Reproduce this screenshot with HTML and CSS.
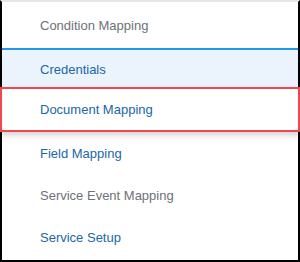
FILE: index.html
```html
<!DOCTYPE html>
<html>
<head>
<meta charset="utf-8">
<link rel="stylesheet" href="styles.css">
</head>
<body>
<div class="frame">
  <ul class="menu">
    <li class="item muted first">Condition Mapping</li>
    <li class="item active">Credentials</li>
    <li class="item highlight">Document Mapping</li>
    <li class="item">Field Mapping</li>
    <li class="item muted">Service Event Mapping</li>
    <li class="item">Service Setup</li>
  </ul>
</div>
</body>
</html>
```
FILE: styles.css
```css
html, body {
  margin: 0;
  padding: 0;
  background: #ffffff;
}
.frame {
  box-sizing: border-box;
  width: 300px;
  height: 262px;
  border-top: 2px solid #e6e6e6;
  border-left: 2px solid #000;
  border-right: 2px solid #000;
  border-bottom: 2px solid #000;
  font-family: "Liberation Sans", Arial, sans-serif;
  font-size: 13px;
}
.menu {
  list-style: none;
  margin: 0;
  padding: 0;
}
.item {
  box-sizing: border-box;
  height: 42px;
  display: flex;
  align-items: center;
  padding-left: 38px;
  color: #2266a8;
}
.item.first {
  height: 46px;
}
.item.muted {
  color: #6d717a;
}
.item.active {
  background: #ebf4fd;
  border-top: 2px solid #1d97e6;
  border-bottom: 1px solid #1d97e6;
  height: 41px;
}
.item.highlight {
  position: relative;
  margin-left: -2px;
  margin-right: -2px;
  margin-top: -2px;
  height: 45px;
  padding-left: 38px;
  border: 2px solid #f0474f;
  box-shadow: 0 3px 6px rgba(0,0,0,0.18);
  background: #fff;
}
```
